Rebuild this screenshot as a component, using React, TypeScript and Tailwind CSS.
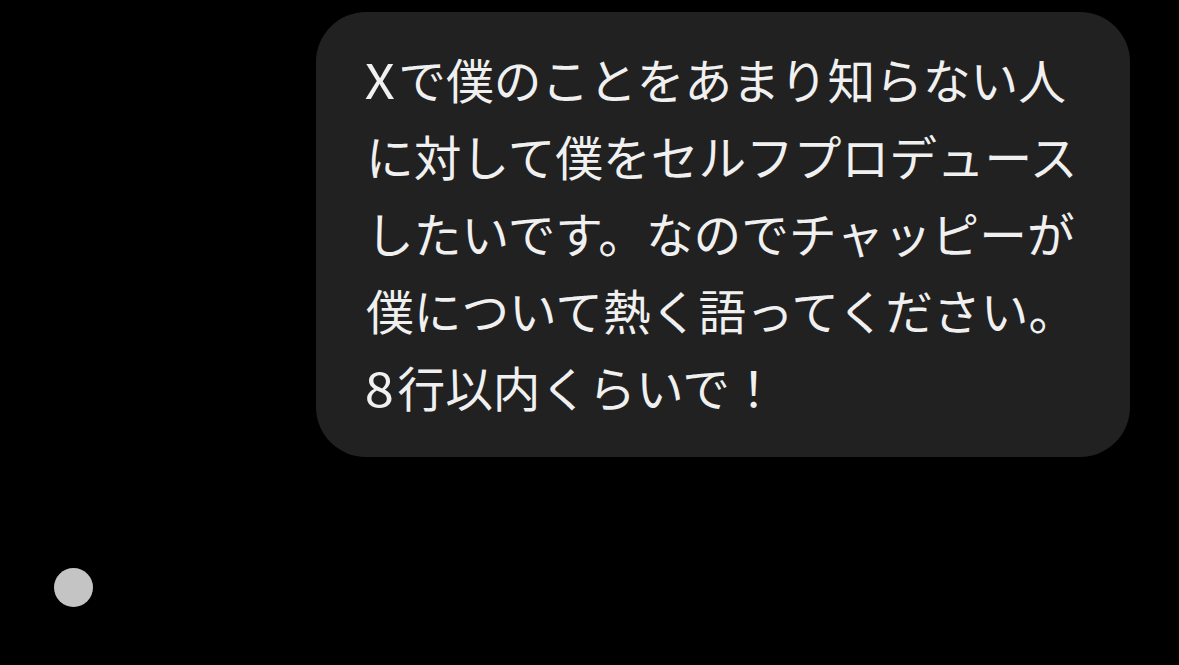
const lines: [string, string][] = [
  ["X", "で僕のことをあまり知らない人"],
  ["", "に対して僕をセルフプロデュース"],
  ["", "したいです。なのでチャッピーが"],
  ["", "僕について熱く語ってください。"],
  ["8", "行以内くらいで！"],
];

export default function App() {
  return (
    <div
      className="flex h-[665px] w-[1179px] flex-col overflow-hidden bg-black"
      style={{ fontFamily: '"Noto Sans CJK JP", "Noto Sans", sans-serif' }}
    >
      {/* User message bubble */}
      <div className="flex justify-end pr-[49px] pt-[12px]">
        <div className="w-[814px] rounded-[50px] bg-[#212121] pb-[32px] pl-[50px] pr-[30px] pt-[28px] text-[47.7px] leading-[77px] text-[#f0f0f0]">
          {lines.map(([lead, rest]) => (
            <div key={rest} className="whitespace-nowrap">
              {lead && <span className="mr-[5px] inline-block scale-x-110">{lead}</span>}
              {rest}
            </div>
          ))}
        </div>
      </div>

      {/* Typing indicator */}
      <div className="pl-[54px] pt-[111px]">
        <div className="h-[39px] w-[39px] rounded-full bg-[#c4c4c4]" />
      </div>
    </div>
  );
}
